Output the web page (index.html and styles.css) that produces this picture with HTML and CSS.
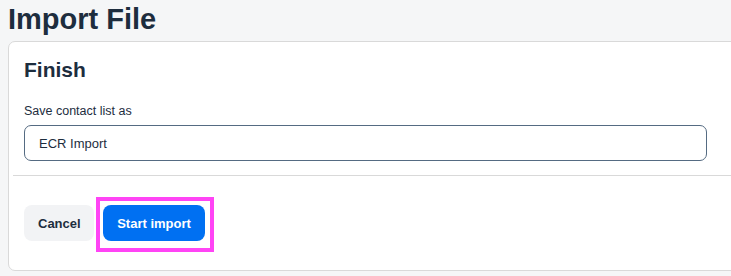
FILE: index.html
```html
<!DOCTYPE html>
<html lang="en">
<head>
<meta charset="UTF-8" />
<meta name="viewport" content="width=device-width, initial-scale=1.0" />
<title>Import File</title>
<link rel="stylesheet" href="styles.css">
</head>
<body>
<h1 class="page-title">Import File</h1>

<div class="card">
    <div class="card-body">
        <h2 class="step-title">Finish</h2>
        <label class="field-label" for="listName">Save contact list as</label>
        <input type="text" id="listName" class="field-input" value="ECR Import">
    </div>
    <div class="card-footer">
        <button type="button" class="btn btn-cancel">Cancel</button>
        <button type="button" class="btn btn-primary highlighted">Start import</button>
    </div>
</div>
</body>
</html>
```

FILE: styles.css
```css
* {
box-sizing: border-box;
}
body {
margin: 0;
background-color: #f5f6f7;
color: #1d2d3e;
font-family: 'Liberation Sans', Arial, sans-serif;
overflow: hidden;
}
.page-title {
margin: 0;
padding: 2px 0 0 8px;
font-size: 29px;
line-height: 34px;
font-weight: 700;
height: 41px;
}
.card {
background-color: #fff;
border: 1px solid #d9d9d9;
border-radius: 7px;
margin-left: 8px;
margin-right: -30px;
height: 230px;
}
.card-body {
padding: 14px 15px 0 15px;
}
.step-title {
margin: 0;
font-size: 21px;
line-height: 28px;
font-weight: 700;
}
.field-label {
display: block;
margin-top: 19px;
font-size: 12.5px;
line-height: 16px;
}
.field-input {
display: block;
margin-top: 6px;
width: 683px;
height: 36px;
border: 1px solid #556b82;
border-radius: 7px;
padding: 0 14px;
font-family: inherit;
font-size: 13px;
color: #1d2d3e;
outline: none;
}
.card-footer {
margin: 14px 0 0 4px;
border-top: 1px solid #d9d9d9;
padding: 29px 0 0 11px;
display: flex;
gap: 9px;
}
.btn {
height: 36px;
border: 0;
border-radius: 8px;
font-family: inherit;
font-size: 13px;
font-weight: 700;
padding: 0 14px;
cursor: pointer;
}
.btn-cancel {
width: 70px;
background-color: #f2f3f5;
color: #1d2d3e;
}
.btn-primary {
width: 102px;
background-color: #0070f2;
color: #fff;
}
.highlighted {
position: relative;
}
.highlighted::after {
content: "";
position: absolute;
top: -8px;
left: -7px;
right: -9px;
bottom: -11px;
border: 4px solid #ff44f5;
}
```
